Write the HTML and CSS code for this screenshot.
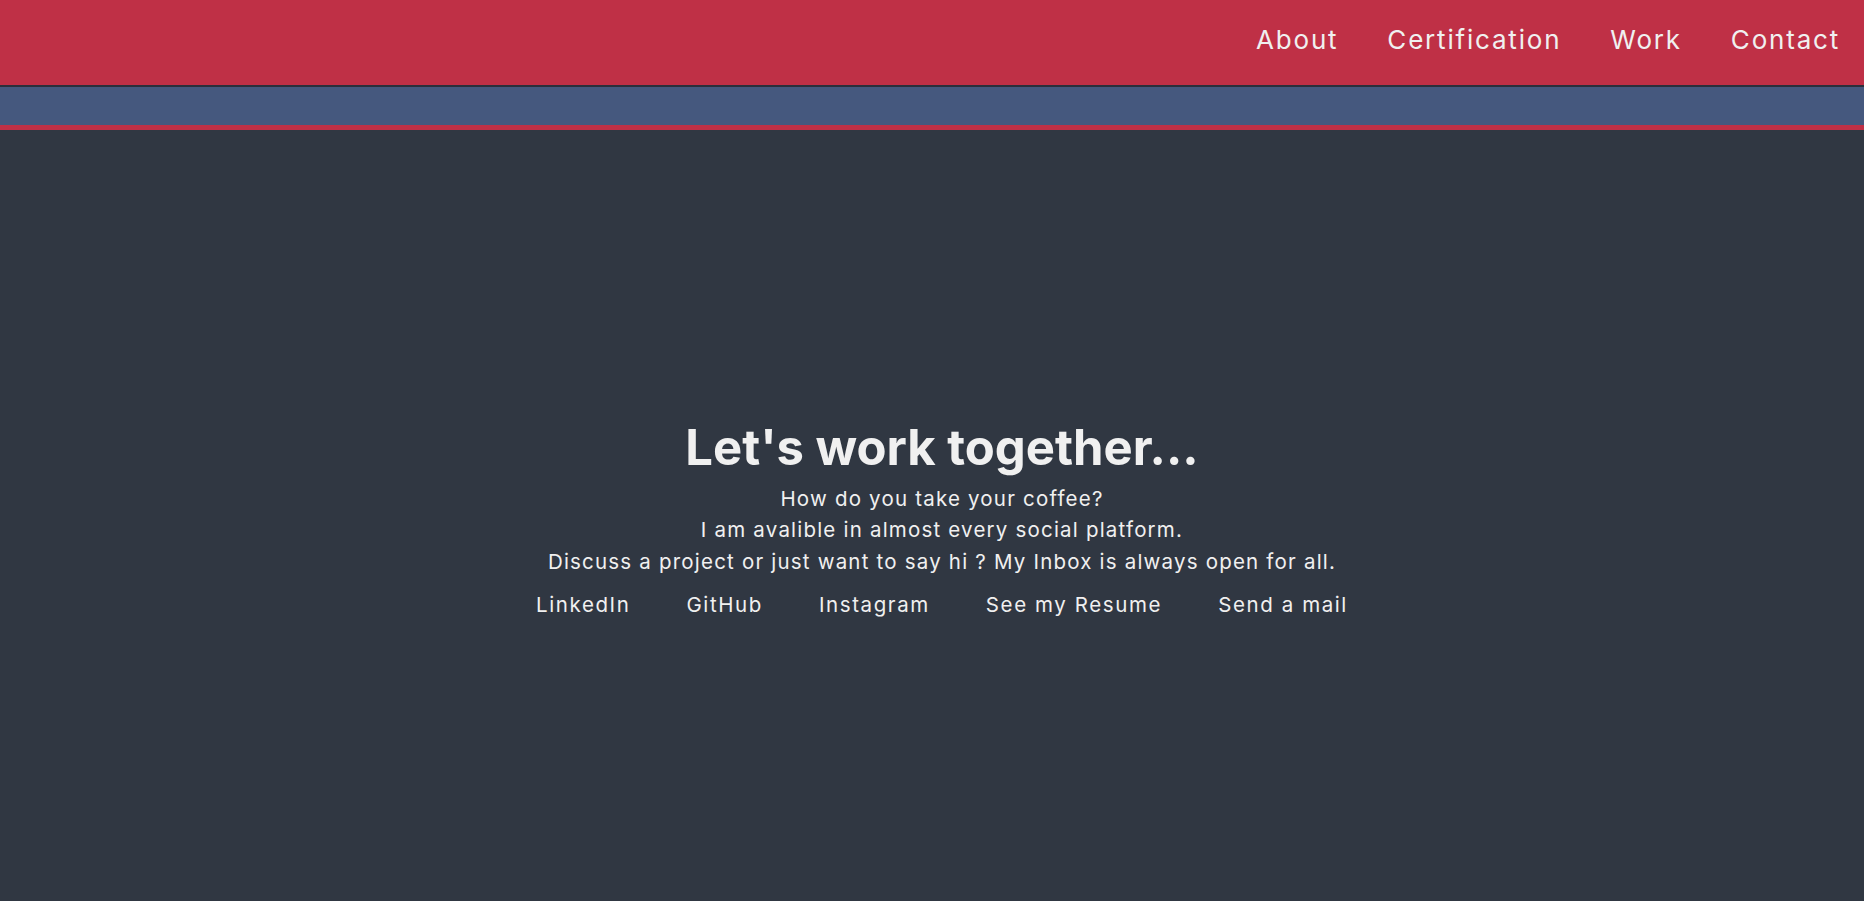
FILE: index.html
```html
<!DOCTYPE html>
<html lang="en">
<head>
<meta charset="utf-8">
<title>Contact</title>
<link rel="stylesheet" href="styles.css">
</head>
<body>
<header class="topbar">
  <nav class="nav">
    <a class="nav-link" href="#about">About</a>
    <a class="nav-link" href="#certification">Certification</a>
    <a class="nav-link" href="#work">Work</a>
    <a class="nav-link" href="#contact">Contact</a>
  </nav>
</header>
<div class="band"></div>
<main class="contact" id="contact">
  <div class="contact-inner">
    <h1 class="title">Let's work together...</h1>
    <p class="lead">How do you take your coffee?<br>I am avalible in almost every social platform.<br>Discuss a project or just want to say hi ? My Inbox is always open for all.</p>
    <div class="links">
      <a class="link" href="#">LinkedIn</a>
      <a class="link" href="#">GitHub</a>
      <a class="link" href="#">Instagram</a>
      <a class="link" href="#">See my Resume</a>
      <a class="link" href="#">Send a mail</a>
    </div>
  </div>
</main>
</body>
</html>
```
FILE: styles.css
```css
html, body {
  margin: 0;
  padding: 0;
  height: 100%;
}
body {
  background: #303742;
  font-family: "Inter", "Noto Sans", sans-serif;
  color: #f0f0f0;
  display: flex;
  flex-direction: column;
  overflow: hidden;
}
.topbar {
  background: #bf3046;
  height: 85px;
  border-bottom: 2px solid #2b2f3b;
  display: flex;
  align-items: center;
  justify-content: flex-end;
  flex-shrink: 0;
}
.nav {
  display: flex;
  gap: 49px;
  padding-right: 24px;
  padding-bottom: 6px;
}
.nav-link {
  color: #f0f0f0;
  text-decoration: none;
  font-size: 26px;
  letter-spacing: 1.8px;
  font-weight: 400;
}
.band {
  background: #45587e;
  height: 38px;
  border-bottom: 5px solid #bf3046;
  flex-shrink: 0;
}
.contact {
  flex: 1;
  display: flex;
  align-items: center;
  justify-content: center;
}
.contact-inner {
  text-align: center;
  padding-top: 8px;
  padding-left: 20px;
}
.title {
  margin: 0 0 6px;
  font-size: 49px;
  font-weight: 700;
  line-height: 58px;
  color: #f0f0f0;
}
.lead {
  margin: 0;
  font-size: 20.5px;
  letter-spacing: 1.2px;
  line-height: 31.5px;
}
.links {
  display: flex;
  justify-content: center;
  gap: 56px;
  margin-top: 13px;
}
.link {
  color: #f0f0f0;
  text-decoration: none;
  font-size: 20.5px;
  letter-spacing: 1.6px;
  line-height: 30px;
}
```
